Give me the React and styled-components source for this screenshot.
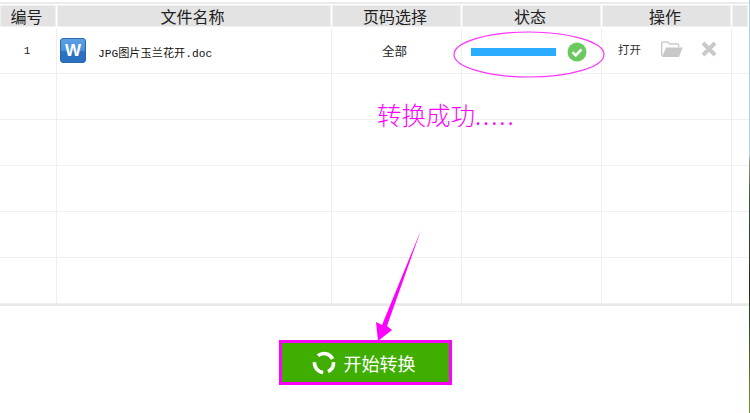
import React from 'react';
import styled, { createGlobalStyle } from 'styled-components';

const GlobalStyle = createGlobalStyle`
    html, body {
        margin: 0;
        padding: 0;
        background: #fff;
    }
`;

const CJK = `"Noto Sans CJK SC", "Liberation Sans", sans-serif`;

const COLUMNS = '57px 275px 130px 140px 130px 17px';

const Page = styled.div`
    position: relative;
    display: flex;
    width: 750px;
    height: 413px;
    overflow: hidden;
    background: #fff;
    font-family: ${CJK};
`;

const Main = styled.div`
    display: flex;
    flex-direction: column;
    width: 749px;
`;

const EdgeStrip = styled.div`
    width: 1px;
    background: linear-gradient(#a9d3e6 0, #a9d3e6 155px, #8a9a80 162px, #3e4f3c 200px, #1c2a1c 290px, #3c5a20 340px, #74952c 413px);
`;

const Header = styled.div`
    display: grid;
    grid-template-columns: ${COLUMNS};
    height: 22px;
    margin-top: 2px;
    padding: 1px 0;
    border-top: 2px solid #ebebeb;
`;

const HeadCell = styled.div`
    display: flex;
    align-items: center;
    justify-content: center;
    margin-right: 1px;
    padding-right: 3px;
    border: 1px solid #f0f0f0;
    background: #e3e3e3;
    color: #222;
    font-size: 16px;
    line-height: 20px;
`;

const Row = styled.div`
    display: grid;
    grid-template-columns: ${COLUMNS};
    height: 46px;
    box-sizing: border-box;
    border-bottom: 1px solid #efefef;
`;

const Cell = styled.div`
    display: flex;
    align-items: center;
    justify-content: ${(p) => p.$align || 'center'};
    gap: ${(p) => p.$gap || 0}px;
    padding: ${(p) => p.$top || 0}px 0 ${(p) => p.$bottom || 0}px ${(p) => p.$pad || 0}px;
    box-sizing: border-box;
    border-right: ${(p) => (p.$last ? 'none' : '1px solid #efefef')};
    color: #222;
    font-size: 12.5px;
`;

const Index = styled.span`
    padding-right: 2px;
    font-family: "Liberation Mono", monospace;
    font-size: 11px;
`;

const FileName = styled.span`
    padding-top: 2px;
    font-family: "Liberation Mono", ${CJK};
    font-size: 11.2px;
    color: #111;
`;

const DocIcon = styled.div`
    display: flex;
    align-items: center;
    justify-content: center;
    width: 26px;
    height: 25px;
    box-sizing: border-box;
    border: 1px solid #2a6aa8;
    border-radius: 3px;
    background: linear-gradient(#5aa0e4 0, #4a90dc 50%, #2a72c6 52%, #2a6fc0 100%);
    color: #fff;
    font-family: "Liberation Sans", sans-serif;
    font-size: 17px;
    font-weight: 700;
    line-height: 1;
`;

const Progress = styled.div`
    width: 85px;
    height: 8px;
    background: #2aacff;
`;

const OpenLink = styled.span`
    width: 23px;
    color: #333;
    font-size: 11.5px;
    white-space: nowrap;
`;

const IconGroup = styled.div`
    display: flex;
    align-items: center;
    gap: 18px;
`;

const Footer = styled.div`
    display: flex;
    flex: 1;
    justify-content: center;
    align-items: flex-start;
    padding: 34px 19px 0 0;
    border-top: 2px solid #e9e9e9;
`;

const StartButton = styled.button`
    display: flex;
    align-items: center;
    justify-content: center;
    gap: 8px;
    width: 173px;
    height: 45px;
    padding: 0 3px 0 0;
    box-sizing: border-box;
    border: 3px solid #ff00ff;
    background: #3fae00;
    color: #fff;
    font-family: ${CJK};
    font-size: 18px;
    cursor: pointer;
`;

const SuccessNote = styled.div`
    position: absolute;
    left: 377px;
    top: 98px;
    color: #ff00ff;
    font-size: 24.5px;
    font-weight: 300;
    line-height: 34px;
    white-space: nowrap;
`;

const Dots = styled.span`
    letter-spacing: 2px;
`;

const Overlay = styled.svg`
    position: absolute;
    left: 0;
    top: 0;
    pointer-events: none;
`;

const CheckIcon = () => (
    <svg width="20" height="20" viewBox="0 0 20 20">
        <circle cx="10" cy="10" r="9.5" fill="#6cc95f" />
        <path d="M5.5 10.2l3.2 3.2 5.8-6" fill="none" stroke="#fff" strokeWidth="2.6" />
    </svg>
);

const FolderIcon = () => (
    <svg width="22" height="16" viewBox="0 0 22 16">
        <path d="M0.7 15V2a1 1 0 0 1 1-1h5l2 2h8a1 1 0 0 1 1 1v2" fill="none" stroke="#cbcbcb" strokeWidth="1.4" />
        <path d="M5 6.5h16.6L18 16H1z" fill="#c8c8c8" />
    </svg>
);

const CloseIcon = () => (
    <svg width="16" height="16" viewBox="0 0 16 16">
        <path d="M2 2l12 12M14 2L2 14" stroke="#c9c9c9" strokeWidth="4" />
    </svg>
);

const SpinIcon = () => (
    <svg width="24" height="24" viewBox="0 0 24 24">
        <g fill="none" stroke="#fff" strokeWidth="3.6">
            <path d="M5.9 4.7A9.5 9.5 0 0 1 20.6 8" />
            <path d="M21.5 11.2A9.5 9.5 0 0 1 16 20.6" />
            <path d="M11.2 21.5A9.5 9.5 0 0 1 2.5 11.2" />
        </g>
    </svg>
);

const headings = ['编号', '文件名称', '页码选择', '状态', '操作', ''];
const emptyRows = [1, 2, 3, 4, 5];

const App = () => (
    <Page>
        <GlobalStyle />
        <Main>
            <Header>
                {headings.map((title, i) => (
                    <HeadCell key={i}>{title}</HeadCell>
                ))}
            </Header>
            <Row>
                <Cell $top={1}><Index>1</Index></Cell>
                <Cell $align="flex-start" $pad={3} $gap={12}>
                    <DocIcon>W</DocIcon>
                    <FileName>JPG图片玉兰花开.doc</FileName>
                </Cell>
                <Cell $align="flex-start" $pad={50}>全部</Cell>
                <Cell $align="flex-start" $pad={9} $gap={11} $top={2}>
                    <Progress />
                    <CheckIcon />
                </Cell>
                <Cell $align="flex-start" $pad={16} $gap={20} $bottom={4}>
                    <OpenLink>打开</OpenLink>
                    <IconGroup>
                        <FolderIcon />
                        <CloseIcon />
                    </IconGroup>
                </Cell>
                <Cell $last />
            </Row>
            {emptyRows.map((n) => (
                <Row key={n}>
                    <Cell /><Cell /><Cell /><Cell /><Cell /><Cell $last />
                </Row>
            ))}
            <Footer>
                <StartButton>
                    <SpinIcon />
                    开始转换
                </StartButton>
            </Footer>
        </Main>
        <EdgeStrip />
        <SuccessNote>转换成功<Dots>.....</Dots></SuccessNote>
        <Overlay width="750" height="413" viewBox="0 0 750 413">
            <ellipse cx="529" cy="54.5" rx="75" ry="22.5" fill="none" stroke="#ff33ff" strokeWidth="1.2" />
            <polygon points="421,230 387,326 392,330 378,341 376,322 382,325" fill="#ff00ff" />
        </Overlay>
    </Page>
);

export default App;
